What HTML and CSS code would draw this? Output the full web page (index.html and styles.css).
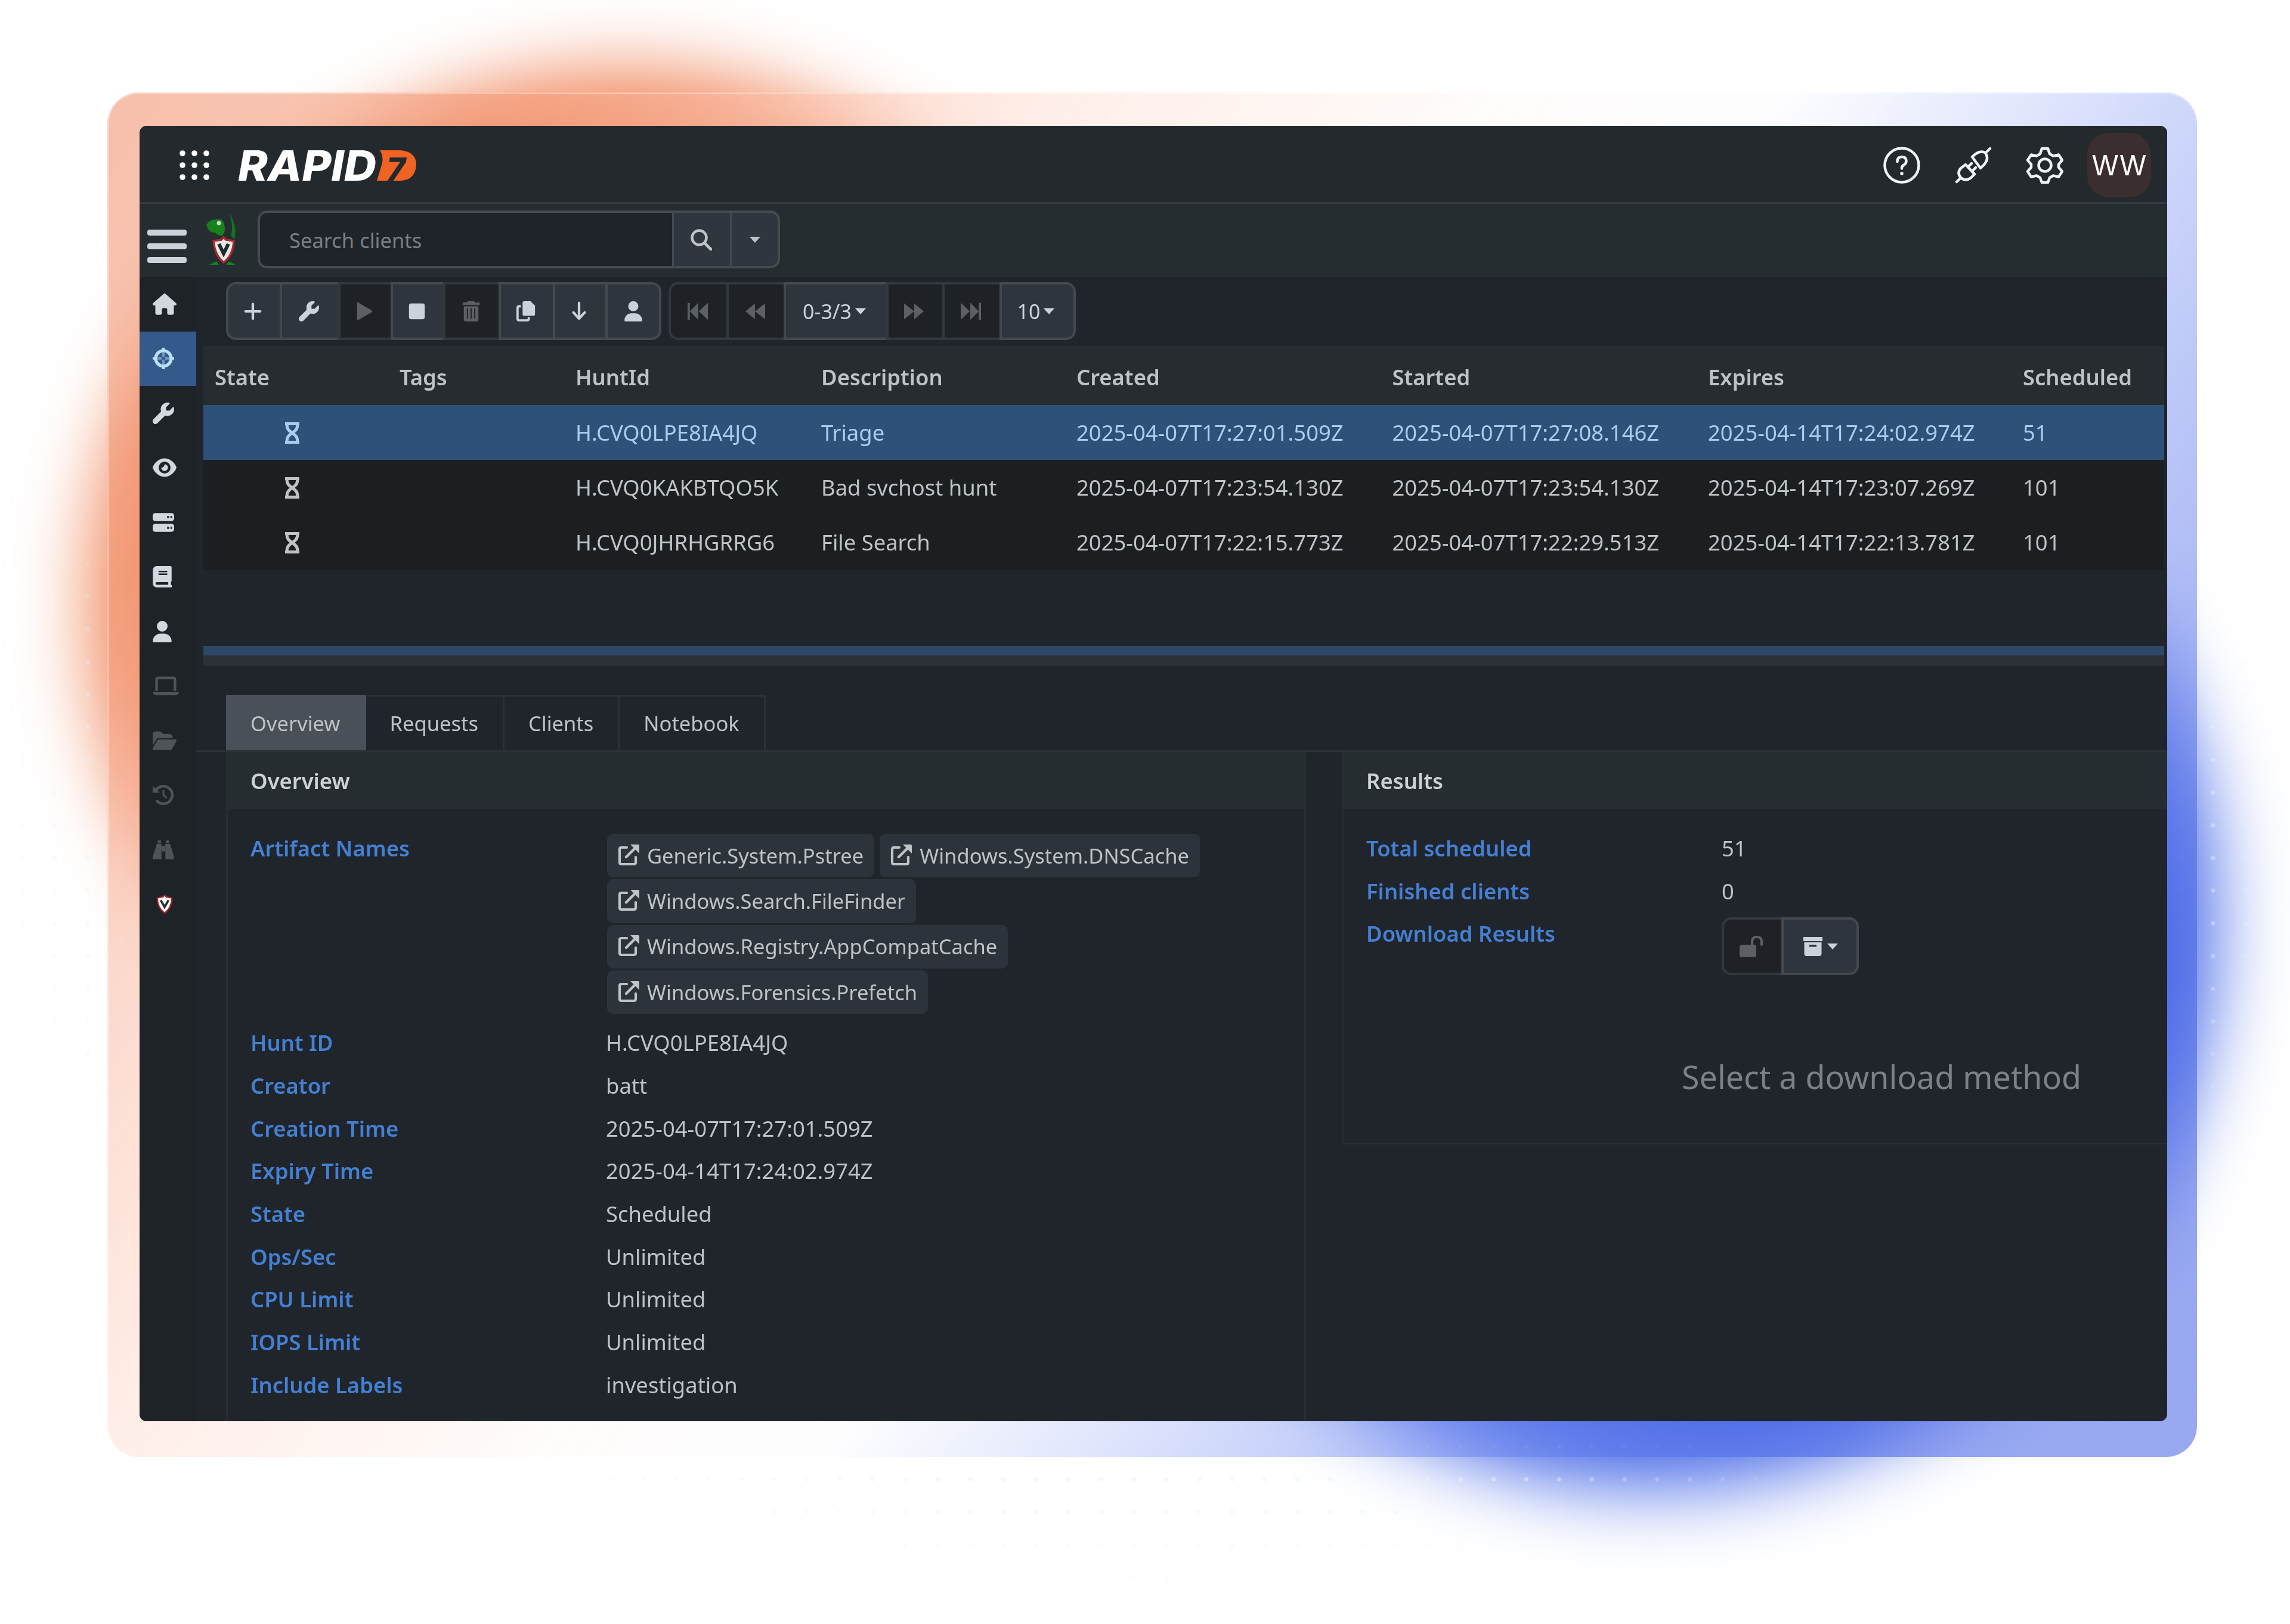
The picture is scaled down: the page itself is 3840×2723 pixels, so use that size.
FILE: index.html
```html
<!DOCTYPE html>
<html lang="en">
  <head>
    <meta charset="UTF-8" />
    <meta name="viewport" content="width=device-width, initial-scale=1.0" />
    <title>Hunts</title>
    <link rel="stylesheet" href="styles.css">
  </head>

  <body>
    <svg class="sprite">
      <symbol id="home" viewBox="0 0 576 512"><path d="M575.8 255.5c0 18-15 32.1-32 32.1h-32l.7 160.2c0 2.7-.2 5.4-.5 8.1V472c0 22.1-17.9 40-40 40H392c-22.1 0-40-17.9-40-40V384c0-17.7-14.3-32-32-32H256c-17.7 0-32 14.3-32 32v88c0 22.1-17.9 40-40 40H104c-22.1 0-40-17.9-40-40V287.6H32c-18 0-32-14-32-32.1c0-9 3-17 10-24L266.4 8c7-7 15-8 22-8s15 2 21 7L564.8 231.5c8 7 12 15 11 24z"/></symbol>
      <symbol id="crosshairs" viewBox="0 0 512 512"><path d="M256 100v120M256 292v120M100 256h120M292 256h120" stroke="currentColor" stroke-width="60" opacity=".45"/><circle cx="256" cy="256" r="185" fill="none" stroke="currentColor" stroke-width="74"/><path d="M226 0h60v80h-60zM226 432h60v80h-60zM0 226h80v60H0zM432 226h80v60h-80z"/></symbol>
      <symbol id="wrench" viewBox="0 0 512 512"><path d="M352 320c88.4 0 160-71.6 160-160c0-15.3-2.2-30.1-6.2-44.2c-3.1-10.8-16.4-13.2-24.3-5.3l-76.8 76.8c-3 3-7.1 4.7-11.3 4.7H336c-8.8 0-16-7.2-16-16V118.6c0-4.2 1.7-8.3 4.7-11.3l76.8-76.8c7.9-7.9 5.4-21.2-5.3-24.3C382.1 2.2 367.3 0 352 0C263.6 0 192 71.6 192 160c0 19.1 3.4 37.5 9.5 54.5L19.9 396.1C7.2 408.8 0 426.1 0 444.1C0 481.6 30.4 512 67.9 512c18 0 35.3-7.2 48-19.9L297.5 310.5c17 6.2 35.4 9.5 54.5 9.5z"/></symbol>
      <symbol id="eye" viewBox="0 0 576 512"><path fill-rule="evenodd" d="M288 32C160 32 50 130 3 244c-3 8-3 16 0 24C50 382 160 480 288 480s238-98 285-212c3-8 3-16 0-24C526 130 416 32 288 32zM288 112a144 144 0 1 1 0 288a144 144 0 1 1 0-288z"/><path d="M288 176c0 45-35 80-80 80c0 50 35 80 80 80s80-35 80-80s-35-80-80-80z"/></symbol>
      <symbol id="server" viewBox="0 0 512 512"><path fill-rule="evenodd" d="M64 32h384a64 64 0 0 1 64 64v64a64 64 0 0 1-64 64H64a64 64 0 0 1-64-64V96a64 64 0 0 1 64-64zM344 104v48h48v-48zM424 104v48h40v-48zM64 288h384a64 64 0 0 1 64 64v64a64 64 0 0 1-64 64H64a64 64 0 0 1-64-64v-64a64 64 0 0 1 64-64zM344 360v48h48v-48zM424 360v48h40v-48z"/></symbol>
      <symbol id="book" viewBox="0 0 448 512"><path fill-rule="evenodd" d="M96 0h320a32 32 0 0 1 32 32v320a32 32 0 0 1-16 28v68a32 32 0 0 1-16 64H96a96 96 0 0 1-96-96V96A96 96 0 0 1 96 0zM96 384a32 32 0 0 0 0 64h272v-64zM136 112v36h208v-36zM136 176v36h208v-36z"/></symbol>
      <symbol id="user" viewBox="0 0 448 512"><path d="M224 256A128 128 0 1 0 224 0a128 128 0 1 0 0 256zm-45.700 48C79.800 304 0 383.800 0 482.300C0 498.700 13.300 512 29.700 512H418.300c16.400 0 29.700-13.300 29.700-29.700C448 383.800 368.200 304 269.700 304H178.300z"/></symbol>
      <symbol id="laptop" viewBox="0 0 640 512"><path fill-rule="evenodd" d="M128 32h384a64 64 0 0 1 64 64v288h-64V96H128v288H64V96a64 64 0 0 1 64-64zM0 403h640c0 42-34 77-77 77H77c-43 0-77-35-77-77z"/></symbol>
      <symbol id="folder" viewBox="0 0 576 512"><path d="M89 224L0 376V96a64 64 0 0 1 64-64h118l90 64h144a64 64 0 0 1 64 64v32H144c-23 0-44 12-55 32zM117 240c6-10 16-16 27-16h400c25 0 40 26 28 48L460 464c-6 10-16 16-27 16H32c-25 0-40-26-28-48z"/></symbol>
      <symbol id="history" viewBox="0 0 512 512"><path d="M75 150a210 210 0 1 1 30 250" fill="none" stroke="currentColor" stroke-width="62" stroke-linecap="round"/><path d="M0 40l170 160H0zM236 140h42v105l70 65-30 34-82-80z"/></symbol>
      <symbol id="binoculars" viewBox="0 0 512 512"><path d="M120 32h80v60h-80zM312 32h80v60h-80zM100 110h110v370H20c-30 0-20-50-10-90zM302 110h110l90 280c10 40 20 90-10 90H302zM215 160h82v130h-82z"/></symbol>
      <symbol id="shield" viewBox="0 0 30 34"><path d="M15 1l3 3 10 2c0 12-4 20-13 27C6 26 2 18 2 6l10-2z" fill="#fff" stroke="#a3212c" stroke-width="2.500"/><path d="M8 10l7 12 7-12" fill="none" stroke="#26332f" stroke-width="4"/></symbol>
      <symbol id="plus" viewBox="0 0 36 36"><path d="M18 5v26M5 18h26" stroke="currentColor" stroke-width="4.500" stroke-linecap="round"/></symbol>
      <symbol id="play" viewBox="0 0 36 36"><path d="M5 3.500v29q0 2 2 1L31 19.500q2-1.500 0-3L7 2.500q-2-1-2 1z"/></symbol>
      <symbol id="stop" viewBox="0 0 36 36"><rect x="4" y="4" width="28" height="28" rx="4"/></symbol>
      <symbol id="trash" viewBox="0 0 36 36"><path fill-rule="evenodd" d="M12 0h11l2 2.500h8v4.500H3V2.500h7zM5 9h26v23q0 4-4 4H9q-4 0-4-4zM10.500 13v18h2V13zM17 13v18h2V13zM23.500 13v18h2V13z"/></symbol>
      <symbol id="copy" viewBox="0 0 36 36"><path d="M15 0h11l8 8v15q0 3-3 3H15q-3 0-3-3V3q0-3 3-3z"/><path d="M9 9H6q-3 0-3 3v19q0 3 3 3h14q3 0 3-3v-2.500" fill="none" stroke="currentColor" stroke-width="4"/></symbol>
      <symbol id="down" viewBox="0 0 36 36"><path d="M18 3v28M8 20l10 11 10-11" fill="none" stroke="currentColor" stroke-width="4.500" stroke-linecap="round" stroke-linejoin="round"/></symbol>
      <symbol id="first" viewBox="0 0 36 36"><path d="M0 3h4v30H0zM19 3v30L4 18zM36 3v30L20 18z"/></symbol>
      <symbol id="back" viewBox="0 0 36 36"><path d="M18 4v28L1 18zM36 4v28L18 18z"/></symbol>
      <symbol id="search" viewBox="0 0 36 36"><circle cx="14.500" cy="14.500" r="12" fill="none" stroke="currentColor" stroke-width="4.500"/><path d="M23.500 23.500L34 34" stroke="currentColor" stroke-width="5" stroke-linecap="round"/></symbol>
      <symbol id="hourglass" viewBox="0 0 28 36"><path d="M2 2.500h24M2 33.500h24M5 3c0 9 3.500 11 9 15 5.500-4 9-6 9-15M5 33c0-9 3.500-11 9-15 5.500 4 9 6 9 15" fill="none" stroke="currentColor" stroke-width="5"/></symbol>
      <symbol id="external" viewBox="0 0 36 36"><path d="M15 5H6q-3 0-3 3v22q0 3 3 3h21q3 0 3-3v-9" fill="none" stroke="currentColor" stroke-width="4.200" stroke-linecap="round"/><path d="M14 21L31 4" stroke="currentColor" stroke-width="4.500" stroke-linecap="round"/><path d="M21 0h13q2 0 2 2v13z"/></symbol>
      <symbol id="unlock" viewBox="0 0 40 36"><rect x="0" y="15" width="28" height="21" rx="4"/><path d="M21 17v-7q0-8 8-8t8 8v5" fill="none" stroke="currentColor" stroke-width="4.200" stroke-linecap="round"/></symbol>
      <symbol id="archive" viewBox="0 0 36 36"><path fill-rule="evenodd" d="M2 2h32v7H2zM3.500 11h29v19q0 4-4 4h-21q-4 0-4-4zM12 15v3.500h12V15z"/></symbol>
    </svg>

    <div class="glow glow-orange"></div>
    <div class="glow glow-blue"></div>
    <div class="dots"></div>

    <div class="frame">
      <div class="app">
        <header class="topbar">
          <svg class="apps" viewBox="0 0 50 50">
            <circle cx="5" cy="5" r="4.800"/><circle cx="25" cy="5" r="4.800"/><circle cx="45" cy="5" r="4.800"/>
            <circle cx="5" cy="25" r="4.800"/><circle cx="25" cy="25" r="4.800"/><circle cx="45" cy="25" r="4.800"/>
            <circle cx="5" cy="45" r="4.800"/><circle cx="25" cy="45" r="4.800"/><circle cx="45" cy="45" r="4.800"/>
          </svg>
          <svg class="logo" viewBox="0 0 302 90">
            <text class="logo-word" x="0" y="71" textLength="232" lengthAdjust="spacingAndGlyphs">RAPID</text>
            <path d="M238 20h34q27 2 27 24-1 26-27 27h-39l9-30q2-11-4-21z" fill="#ef6423"/>
            <text class="logo-seven" x="249" y="71">7</text>
          </svg>
          <div class="top-actions">
            <svg class="top-icon" viewBox="0 0 62 62"><circle cx="31" cy="31" r="28.500"/><path d="M23.500 25q0-8 7.500-8t7.500 7q0 4-4 6.500t-3.500 6"/><circle class="solid" cx="31" cy="45" r="2.800"/></svg>
            <svg class="top-icon" viewBox="0 0 62 62"><path d="M3 59l7-7M59 3l-7 7M29 17q12-12 22-7 7 10-2 20l-6 6zM18 30l15 16-6 6q-9 7-17 0-7-8 0-16zM22 34l6-6M29 41l6-6"/></svg>
            <svg class="top-icon" viewBox="0 0 62 62"><path d="M26 3h10l3 9 6 3.500 9-2 6 9-6 7v5l6 7-6 9-9-2-6 3.500-3 8H26l-3-8-6-3.500-9 2-6-9 6-7v-5l-6-7 6-9 9 2 6-3.500z"/><circle cx="31" cy="31" r="10.500"/></svg>
            <div class="avatar">WW</div>
          </div>
        </header>

        <div class="searchbar">
          <div class="menu"><span></span><span></span><span></span></div>
          <svg class="mascot" viewBox="0 0 54 90">
            <path d="M3 20q5-9 16-9 10-2 13 5 5 13-2 22-8 1-12-5-11 1-15-13z" fill="#17821d"/>
            <path d="M42 1q14 22 8 43l-6-6q5-12-2-37z" fill="#12731a"/>
            <circle cx="24" cy="17" r="3.500" fill="#c9dcc9"/>
            <path d="M8 87l12-6 4 6zM36 87l5-6 11 6z" fill="#17821d"/>
            <path d="M32 41l4 4 13 2q-1 24-17 36Q17 71 15 47l13-2z" fill="#e6e9e7" stroke="#a52b31" stroke-width="3.500"/>
            <path d="M24 52l8 16 8-16" fill="none" stroke="#222b2b" stroke-width="6"/>
          </svg>
          <div class="search">
            <div class="search-input">Search clients</div>
            <div class="search-btn"><svg class="icon"><use href="#search"/></svg></div>
            <div class="search-caret"><i class="caret"></i></div>
          </div>
        </div>

        <div class="body">
          <nav class="sidebar">
            <a><svg class="icon wide"><use href="#home"/></svg></a>
            <a class="active"><svg class="icon"><use href="#crosshairs"/></svg></a>
            <a><svg class="icon"><use href="#wrench"/></svg></a>
            <a><svg class="icon wide"><use href="#eye"/></svg></a>
            <a><svg class="icon"><use href="#server"/></svg></a>
            <a><svg class="icon narrow"><use href="#book"/></svg></a>
            <a><svg class="icon narrow"><use href="#user"/></svg></a>
            <a class="off"><svg class="icon laptop"><use href="#laptop"/></svg></a>
            <a class="off"><svg class="icon wide"><use href="#folder"/></svg></a>
            <a class="off"><svg class="icon"><use href="#history"/></svg></a>
            <a class="off"><svg class="icon"><use href="#binoculars"/></svg></a>
            <a><svg class="icon shield"><use href="#shield"/></svg></a>
          </nav>

          <main class="main">
            <div class="toolbar">
              <div class="btn-group group-actions">
                <button><svg class="icon"><use href="#plus"/></svg></button>
                <button><svg class="icon"><use href="#wrench"/></svg></button>
                <button disabled><svg class="icon"><use href="#play"/></svg></button>
                <button><svg class="icon"><use href="#stop"/></svg></button>
                <button disabled><svg class="icon"><use href="#trash"/></svg></button>
                <button><svg class="icon"><use href="#copy"/></svg></button>
                <button><svg class="icon"><use href="#down"/></svg></button>
                <button><svg class="icon"><use href="#user"/></svg></button>
              </div>
              <div class="btn-group group-pages">
                <button disabled><svg class="icon"><use href="#first"/></svg></button>
                <button disabled><svg class="icon"><use href="#back"/></svg></button>
                <button>0-3/3<i class="caret"></i></button>
                <button disabled><svg class="icon flip"><use href="#back"/></svg></button>
                <button disabled><svg class="icon flip"><use href="#first"/></svg></button>
                <button>10<i class="caret"></i></button>
              </div>
            </div>

            <div class="table">
              <div class="row head"><span>State</span><span>Tags</span><span>HuntId</span><span>Description</span><span>Created</span><span>Started</span><span>Expires</span><span>Scheduled</span></div>
              <div class="row selected"><span class="state"><svg><use href="#hourglass"/></svg></span><span></span><span>H.CVQ0LPE8IA4JQ</span><span>Triage</span><span>2025-04-07T17:27:01.509Z</span><span>2025-04-07T17:27:08.146Z</span><span>2025-04-14T17:24:02.974Z</span><span>51</span></div>
              <div class="row"><span class="state"><svg><use href="#hourglass"/></svg></span><span></span><span>H.CVQ0KAKBTQO5K</span><span>Bad svchost hunt</span><span>2025-04-07T17:23:54.130Z</span><span>2025-04-07T17:23:54.130Z</span><span>2025-04-14T17:23:07.269Z</span><span>101</span></div>
              <div class="row"><span class="state"><svg><use href="#hourglass"/></svg></span><span></span><span>H.CVQ0JHRHGRRG6</span><span>File Search</span><span>2025-04-07T17:22:15.773Z</span><span>2025-04-07T17:22:29.513Z</span><span>2025-04-14T17:22:13.781Z</span><span>101</span></div>
            </div>
            <div class="splitter"></div>

            <div class="tabs">
              <a class="active">Overview</a><a>Requests</a><a>Clients</a><a>Notebook</a>
            </div>

            <div class="cards">
              <section class="card overview">
                <h5>Overview</h5>
                <dl>
                  <dt>Artifact Names</dt>
                  <dd class="badges">
                    <span class="badge"><svg class="icon"><use href="#external"/></svg>Generic.System.Pstree</span>
                    <span class="badge"><svg class="icon"><use href="#external"/></svg>Windows.System.DNSCache</span>
                    <span class="badge"><svg class="icon"><use href="#external"/></svg>Windows.Search.FileFinder</span>
                    <span class="badge"><svg class="icon"><use href="#external"/></svg>Windows.Registry.AppCompatCache</span>
                    <span class="badge"><svg class="icon"><use href="#external"/></svg>Windows.Forensics.Prefetch</span>
                  </dd>
                  <dt>Hunt ID</dt><dd>H.CVQ0LPE8IA4JQ</dd>
                  <dt>Creator</dt><dd>batt</dd>
                  <dt>Creation Time</dt><dd>2025-04-07T17:27:01.509Z</dd>
                  <dt>Expiry Time</dt><dd>2025-04-14T17:24:02.974Z</dd>
                  <dt>State</dt><dd>Scheduled</dd>
                  <dt>Ops/Sec</dt><dd>Unlimited</dd>
                  <dt>CPU Limit</dt><dd>Unlimited</dd>
                  <dt>IOPS Limit</dt><dd>Unlimited</dd>
                  <dt>Include Labels</dt><dd>investigation</dd>
                </dl>
              </section>
              <section class="card results">
                <h5>Results</h5>
                <dl>
                  <dt>Total scheduled</dt><dd>51</dd>
                  <dt>Finished clients</dt><dd>0</dd>
                  <dt>Download Results</dt>
                  <dd>
                    <div class="btn-group group-download">
                      <button disabled><svg class="icon unlock"><use href="#unlock"/></svg></button>
                      <button><svg class="icon"><use href="#archive"/></svg><i class="caret"></i></button>
                    </div>
                  </dd>
                </dl>
                <p class="no-content">Select a download method</p>
              </section>
            </div>
          </main>
        </div>
      </div>
    </div>
  </body>
</html>
```
FILE: styles.css
```css
* {
  box-sizing: border-box;
}
body {
  position: relative;
  width: 3840px;
  height: 2723px;
  margin: 0;
  padding: 155px 0 0 180px;
  overflow: hidden;
  background: #fff;
  color: #bfc3c6;
  font-family: "Noto Sans", sans-serif;
  font-size: 36.4px;
}
.sprite {
  position: absolute;
  width: 0;
  height: 0;
}

/* backdrop */
.glow {
  position: absolute;
  border-radius: 50%;
}
.glow-orange {
  left: 150px;
  top: 118px;
  width: 1790px;
  height: 1790px;
  background: #f0875c;
  filter: blur(62px);
}
.glow-blue {
  left: 1830px;
  top: 600px;
  width: 1880px;
  height: 1890px;
  background: #3f63e6;
  filter: blur(66px);
}
.dots {
  position: absolute;
  inset: 0;
  background-image: radial-gradient(circle, rgba(232, 246, 255, 0.7) 2.5px, transparent 4.5px);
  background-size: 54.83px 54.83px;
  background-position: 10px -14.3px;
  mask-image: radial-gradient(1980px 1300px at 1920px 1400px, #000 85%, transparent 100%);
}
.frame {
  position: relative;
  width: 3504px;
  height: 2288px;
  padding: 56px 50px 60px 54px;
  border-radius: 52px;
  background: linear-gradient(
    125deg,
    rgba(240, 142, 106, 0.56) 0%,
    rgba(243, 155, 122, 0.55) 12%,
    rgba(255, 226, 216, 0.6) 31%,
    rgba(255, 248, 246, 0.5) 45%,
    rgba(252, 252, 255, 0.45) 55%,
    rgba(140, 160, 245, 0.46) 70%,
    rgba(75, 103, 230, 0.57) 88%,
    rgba(75, 103, 230, 0.57) 100%
  );
  box-shadow: inset 0 3px 0 rgba(255, 255, 255, 0.3), inset 3px 0 0 rgba(255, 255, 255, 0.3);
  backdrop-filter: blur(20px);
}
.app {
  display: flex;
  flex-direction: column;
  width: 3400px;
  height: 2172px;
  overflow: hidden;
  border-radius: 12px;
  background: #20242b;
}

.topbar {
  display: flex;
  flex: none;
  align-items: center;
  height: 131px;
  padding: 3px 27px 0 67px;
  border-bottom: 3px solid #353c3f;
  background: #23292c;
}
.apps {
  width: 50px;
  height: 50px;
  fill: #fff;
}
.logo {
  width: 302px;
  height: 90px;
  margin-left: 48px;
  overflow: visible;
}
.logo-word {
  font: italic 800 70px Inter, sans-serif;
  fill: #fff;
}
.logo-seven {
  font: italic 800 54px Inter, sans-serif;
  fill: #23292c;
}
.top-actions {
  display: flex;
  align-items: center;
  margin-left: auto;
}
.top-icon {
  width: 62px;
  height: 62px;
  margin-right: 58px;
  fill: none;
  stroke: #f1f4f4;
  stroke-width: 4.5;
  stroke-linejoin: round;
  stroke-linecap: round;
}
.top-icon .solid {
  fill: #f1f4f4;
  stroke: none;
}
.avatar {
  width: 107px;
  margin-left: -18px;
  border-radius: 36px;
  background: #3a2f2e;
  color: #fff;
  font: 46px/108px Inter, sans-serif;
  text-align: center;
}

.searchbar {
  display: flex;
  flex: none;
  height: 122px;
  padding: 11px 13px;
  background: #262d31;
}
.menu {
  display: flex;
  flex-direction: column;
  gap: 13px;
  width: 66px;
  margin-top: 32px;
}
.menu span {
  height: 10px;
  border-radius: 4px;
  background: #ccd2da;
}
.mascot {
  width: 54px;
  height: 90px;
  margin: 4px 35px 0 30px;
}
.search {
  display: flex;
  width: 876px;
  height: 97px;
  overflow: hidden;
  border: 4px solid #454b50;
  border-radius: 16px;
  background: #2f363d;
}
.search-input {
  width: 691px;
  padding-left: 49px;
  background: #1f232a;
  color: #7b7f83;
  font-size: 34.5px;
  line-height: 91px;
}
.search-btn,
.search-caret {
  display: flex;
  align-items: center;
  justify-content: center;
  border-left: 3px solid #454b50;
}
.search-btn {
  width: 97px;
  padding-right: 3px;
}
.search-caret {
  flex: 1;
}
.search-caret .caret {
  margin: 0;
}
.caret {
  display: inline-block;
  margin-left: 6px;
  border: 9px solid transparent;
  border-top: 10px solid currentColor;
  border-bottom: 0;
}
.icon {
  display: block;
  flex: none;
  width: 36px;
  height: 36px;
  fill: currentColor;
}
.icon.wide {
  width: 40px;
}
.icon.narrow {
  width: 32px;
}
.icon.laptop {
  width: 44px;
}
.icon.shield {
  width: 40px;
  height: 32px;
}
.icon.flip {
  transform: scaleX(-1);
}

.body {
  display: flex;
  flex: 1;
  min-height: 0;
}
.sidebar {
  flex: none;
  width: 95px;
  background: #1e2328;
  color: #d3d8df;
}
.sidebar a {
  display: flex;
  align-items: center;
  height: 91.5px;
  padding-left: 22px;
}
.sidebar .active {
  background: #345a8c;
  color: #bbe0f8;
}
.sidebar .off {
  color: #505457;
}
.main {
  flex: 1;
  min-width: 0;
}

.toolbar {
  display: flex;
  gap: 12px;
  height: 116px;
  padding: 9px 0 0 50px;
}
.btn-group {
  display: grid;
  height: 97px;
}
.btn-group button {
  display: flex;
  align-items: center;
  justify-content: center;
  padding: 0 4px 0 0;
  border: solid #44494e;
  border-width: 4px 0 4px 4px;
  background: #2f353c;
  color: #ccd2d9;
  font: inherit;
  font-size: 34px;
}
.btn-group button:first-child {
  border-radius: 16px 0 0 16px;
}
.btn-group button:last-child {
  padding: 0;
  border-right-width: 4px;
  border-radius: 0 16px 16px 0;
}
.btn-group button:disabled {
  border-color: #33383c;
  background: #1e2227;
  color: #5c6063;
}
.group-actions {
  grid-template-columns: 90px 98px 88px 88px 93px 91px 88px 94px;
}
.group-pages {
  grid-template-columns: 97px 96px 172px 94px 96px 128px;
}
.group-download {
  grid-template-columns: 100px 130px;
}
.toolbar .icon {
  width: 34px;
  height: 34px;
}
.group-pages button:nth-child(3),
.group-pages button:last-child {
  padding-right: 6px;
}

.table {
  width: 3288px;
  height: 503px;
  margin-left: 12px;
}
.row {
  display: grid;
  grid-template-columns: 310px 295px 412px 428px 529.5px 529.5px 528px 1fr;
  height: 92px;
  padding-left: 19px;
  background: #1b1f22;
  line-height: 93px;
  white-space: nowrap;
}
.row.head {
  height: 99px;
  background: #262c30;
  font-weight: 600;
  line-height: 105px;
}
.row.selected {
  background: #2f5079;
  color: #a9cdef;
}
.state svg {
  display: block;
  width: 28px;
  height: 36px;
  margin: 29px 0 0 116px;
}
.splitter {
  height: 34px;
  margin: 0 5px 0 12px;
  border-top: 16px solid #2d4866;
  background: #2b3135;
}

.tabs {
  display: flex;
  height: 144px;
  padding: 48px 0 0 50px;
  border-bottom: 3px solid #2b3134;
  font-size: 34.5px;
}
.tabs a {
  padding: 0 41px 0 40px;
  border: solid #2b3134;
  border-width: 3px 3px 0 0;
  line-height: 90px;
}
.tabs .active {
  padding: 0 40px 0 41px;
  border-color: #495057;
  background: #495057;
}

.cards {
  display: flex;
  gap: 60px;
  height: 1130px;
  padding-left: 50px;
}
.card {
  flex: none;
  border: 3px solid #272d30;
  border-top: 0;
}
.overview {
  width: 1811px;
}
.results {
  width: 1600px;
  height: 658px;
}
.card h5 {
  margin: 0;
  padding-left: 38px;
  background: #262d30;
  color: #ced1d3;
  font-size: inherit;
  font-weight: 600;
  line-height: 96px;
}
.card dl {
  display: grid;
  grid-template-columns: 596px 1fr;
  margin: 0;
  padding: 30px 0 0 38px;
  line-height: 71.7px;
}
.card dt {
  color: #4480d2;
  font-weight: 600;
}
.card dd {
  margin: 0;
}
.card .badges {
  display: flex;
  flex-wrap: wrap;
  gap: 3px 9px;
  width: 1110px;
  margin: 11px 0 13px 2px;
}
.badge {
  display: flex;
  align-items: center;
  height: 73.3px;
  padding: 0 18px;
  border-radius: 10px;
  background: #2d333b;
  font-size: 34.5px;
}
.badge .icon {
  margin: -2px 13px 0 0;
}
.group-download {
  margin-top: 8px;
}
.group-download .unlock {
  width: 40px;
}
.no-content {
  margin: 131px 0 0 567px;
  color: #7c8187;
  font-size: 53.8px;
  line-height: 78px;
}
```
